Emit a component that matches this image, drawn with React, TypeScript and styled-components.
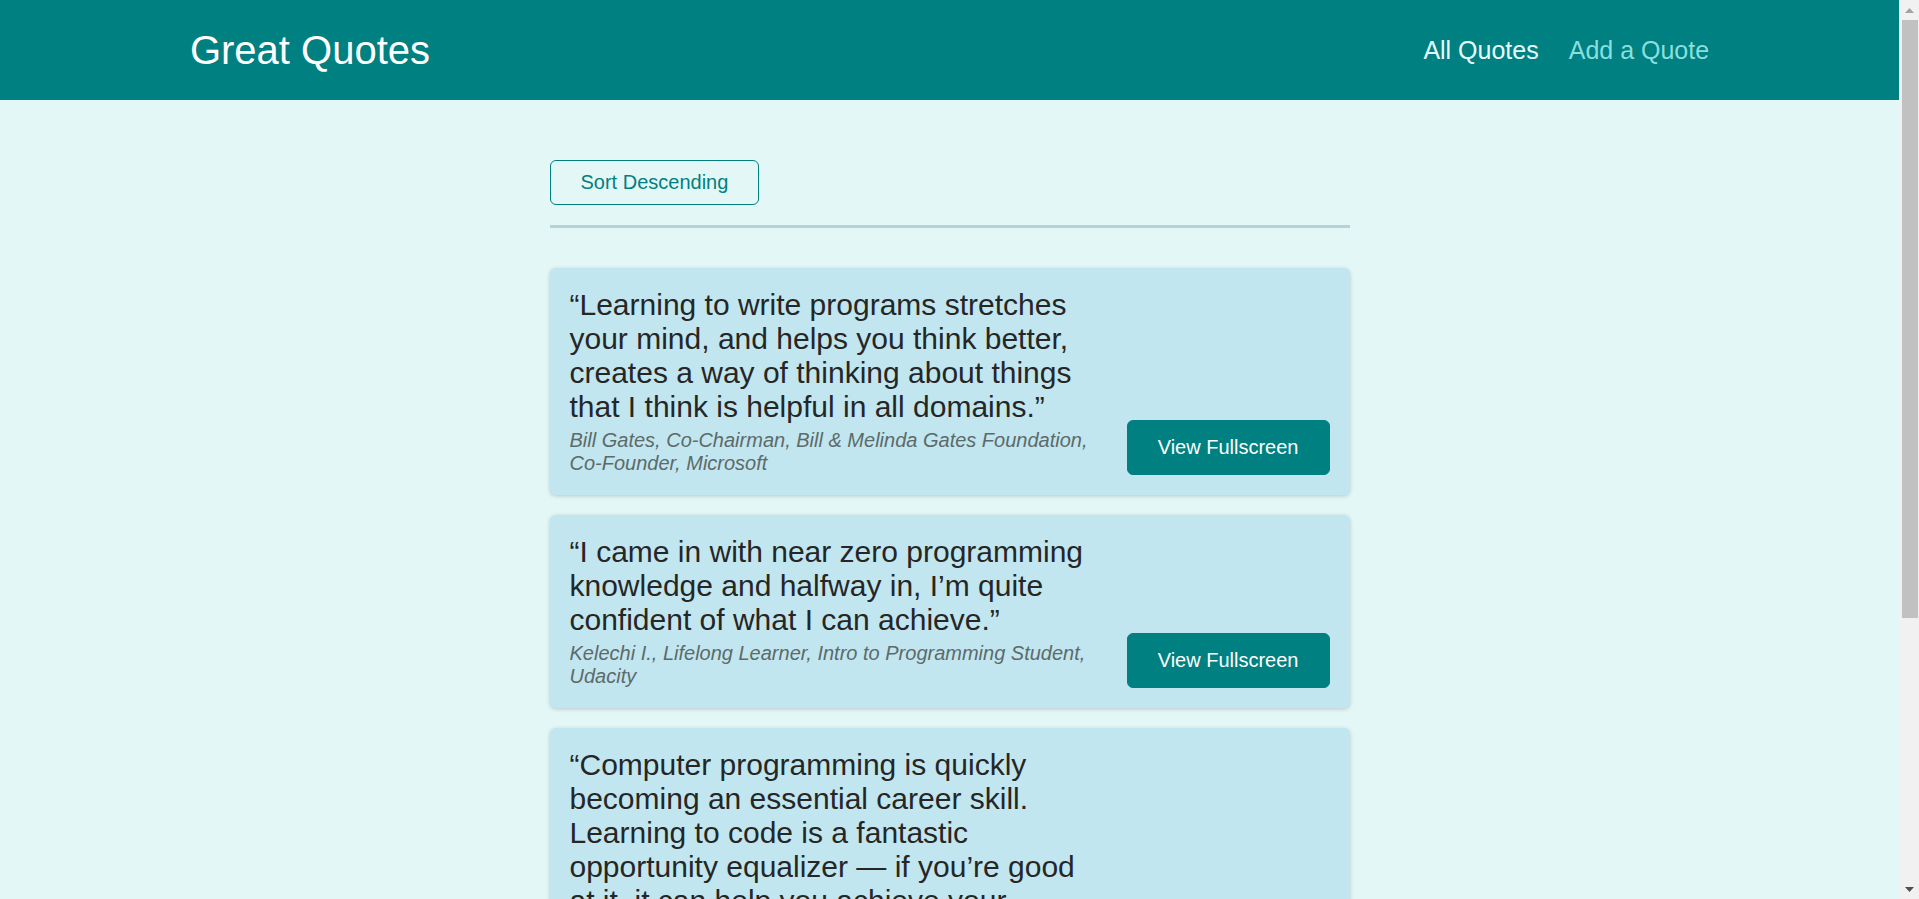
import React from 'react';
import styled, { createGlobalStyle, css } from 'styled-components';

const teal = '#008080';

const GlobalStyle = createGlobalStyle`
  * {
    box-sizing: border-box;
  }

  html {
    font-family: 'Liberation Sans', Arial, sans-serif;
    font-size: 20px;
  }

  body {
    margin: 0;
    overflow: hidden;
    background-color: #e4f7f7;
  }
`;

// page + a windows-style scrollbar drawn beside it
const Screen = styled.div`
  display: flex;
  height: 100vh;
`;

const Viewport = styled.div`
  flex: 1;
  min-width: 0;
  overflow-y: auto;
  scrollbar-width: none;

  &::-webkit-scrollbar {
    display: none;
  }
`;

const ScrollBar = styled.div`
  width: 20px;
  flex-shrink: 0;
  display: flex;
  flex-direction: column;
  align-items: center;
  background-color: #f1f1f1;
`;

const ScrollArrow = styled.div<{ down?: boolean }>`
  height: 20px;
  width: 100%;
  display: flex;
  align-items: center;
  justify-content: center;
  color: ${props => (props.down ? '#505050' : '#a3a3a3')};
`;

const ScrollThumb = styled.div`
  width: 16px;
  height: 598px;
  margin-left: 1px;
  background-color: #c1c1c1;
`;

const ScrollSpacer = styled.div`
  flex: 1;
`;

const Header = styled.header`
  width: 100%;
  height: 100px;
  display: flex;
  align-items: center;
  justify-content: space-between;
  background-color: ${teal};
  padding: 0 10%;
`;

const Logo = styled.div`
  font-size: 40px;
  color: white;
`;

const NavList = styled.ul`
  list-style: none;
  margin: 0;
  padding: 0;
  display: flex;
  align-items: baseline;
`;

const NavItem = styled.li`
  margin-left: 30px;
  font-size: 25px;
`;

const NavLink = styled.a<{ active?: boolean }>`
  text-decoration: none;
  color: #88dfdf;
  cursor: pointer;

  ${props =>
    props.active &&
    css`
      color: #e6fcfc;
    `};
`;

const Main = styled.main`
  margin: 60px auto;
  width: 90%;
  max-width: 800px;
`;

const Sorting = styled.div`
  padding: 0 0 20px;
  border-bottom: 3px solid #b3d4d4;
`;

const SortButton = styled.button`
  font: inherit;
  font-size: 20px;
  padding: 10px 30px;
  border: 1px solid ${teal};
  border-radius: 6px;
  background: transparent;
  color: ${teal};
  cursor: pointer;
`;

const List = styled.ul`
  list-style: none;
  margin: 0;
  padding: 40px 0 20px;
  display: flex;
  flex-direction: column;
  gap: 20px;
`;

const Card = styled.li`
  display: flex;
  justify-content: space-between;
  align-items: flex-end;
  gap: 20px;
  padding: 20px;
  background-color: #c1e6ef;
  border-radius: 6px;
  box-shadow: 0 1px 4px rgba(0, 0, 0, 0.2);
`;

const Figure = styled.figure`
  margin: 0;
  padding: 0;
  font-size: 30px;
  flex: 1 1 auto;
`;

const Quote = styled.blockquote`
  margin: 0;
  color: #262626;

  p {
    margin: 0;
  }
`;

const Caption = styled.figcaption`
  margin-top: 5px;
  font-size: 20px;
  font-style: italic;
  color: #5d6a6a;
`;

const FullButton = styled.a`
  flex-shrink: 0;
  font-size: 20px;
  text-decoration: none;
  cursor: pointer;
  background-color: ${teal};
  border: 1px solid ${teal};
  color: white;
  padding: 15px 30px;
  border-radius: 6px;
`;

interface QuoteData {
  id: string;
  text: string;
  author: string;
}

const QUOTES: QuoteData[] = [
  {
    id: 'q1',
    text: 'Learning to write programs stretches your mind, and helps you think better, creates a way of thinking about things that I think is helpful in all domains.',
    author: 'Bill Gates, Co-Chairman, Bill & Melinda Gates Foundation, Co-Founder, Microsoft',
  },
  {
    id: 'q2',
    text: 'I came in with near zero programming knowledge and halfway in, I\u2019m quite confident of what I can achieve.',
    author: 'Kelechi I., Lifelong Learner, Intro to Programming Student, Udacity',
  },
  {
    id: 'q3',
    text: 'Computer programming is quickly becoming an essential career skill. Learning to code is a fantastic opportunity equalizer \u2014 if you\u2019re good at it, it can help you achieve your dreams, wherever you are starting from.',
    author: 'Udacity Student, Intro to Programming Nanodegree',
  },
  {
    id: 'q4',
    text: 'Everybody should learn to program a computer, because it teaches you how to think.',
    author: 'Steve Jobs, Co-Founder, Apple',
  },
];

const Arrow = ({ down }: { down?: boolean }) => (
  <ScrollArrow down={down}>
    <svg width="9" height="5" viewBox="0 0 9 5">
      <path d={down ? 'M0 0h9L4.5 5z' : 'M0 5h9L4.5 0z'} fill="currentColor" />
    </svg>
  </ScrollArrow>
);

const QuoteItem = ({ text, author }: QuoteData) => (
  <Card>
    <Figure>
      <Quote>
        <p>{`\u201C${text}\u201D`}</p>
      </Quote>
      <Caption>{author}</Caption>
    </Figure>
    <FullButton>View Fullscreen</FullButton>
  </Card>
);

export default function App() {
  return (
    <>
      <GlobalStyle />
      <Screen>
        <Viewport>
          <Header>
            <Logo>Great Quotes</Logo>
            <nav>
              <NavList>
                <NavItem>
                  <NavLink active>All Quotes</NavLink>
                </NavItem>
                <NavItem>
                  <NavLink>Add a Quote</NavLink>
                </NavItem>
              </NavList>
            </nav>
          </Header>
          <Main>
            <Sorting>
              <SortButton>Sort Descending</SortButton>
            </Sorting>
            <List>
              {QUOTES.map(quote => (
                <QuoteItem key={quote.id} {...quote} />
              ))}
            </List>
          </Main>
        </Viewport>
        <ScrollBar>
          <Arrow />
          <ScrollThumb />
          <ScrollSpacer />
          <Arrow down />
        </ScrollBar>
      </Screen>
    </>
  );
}
